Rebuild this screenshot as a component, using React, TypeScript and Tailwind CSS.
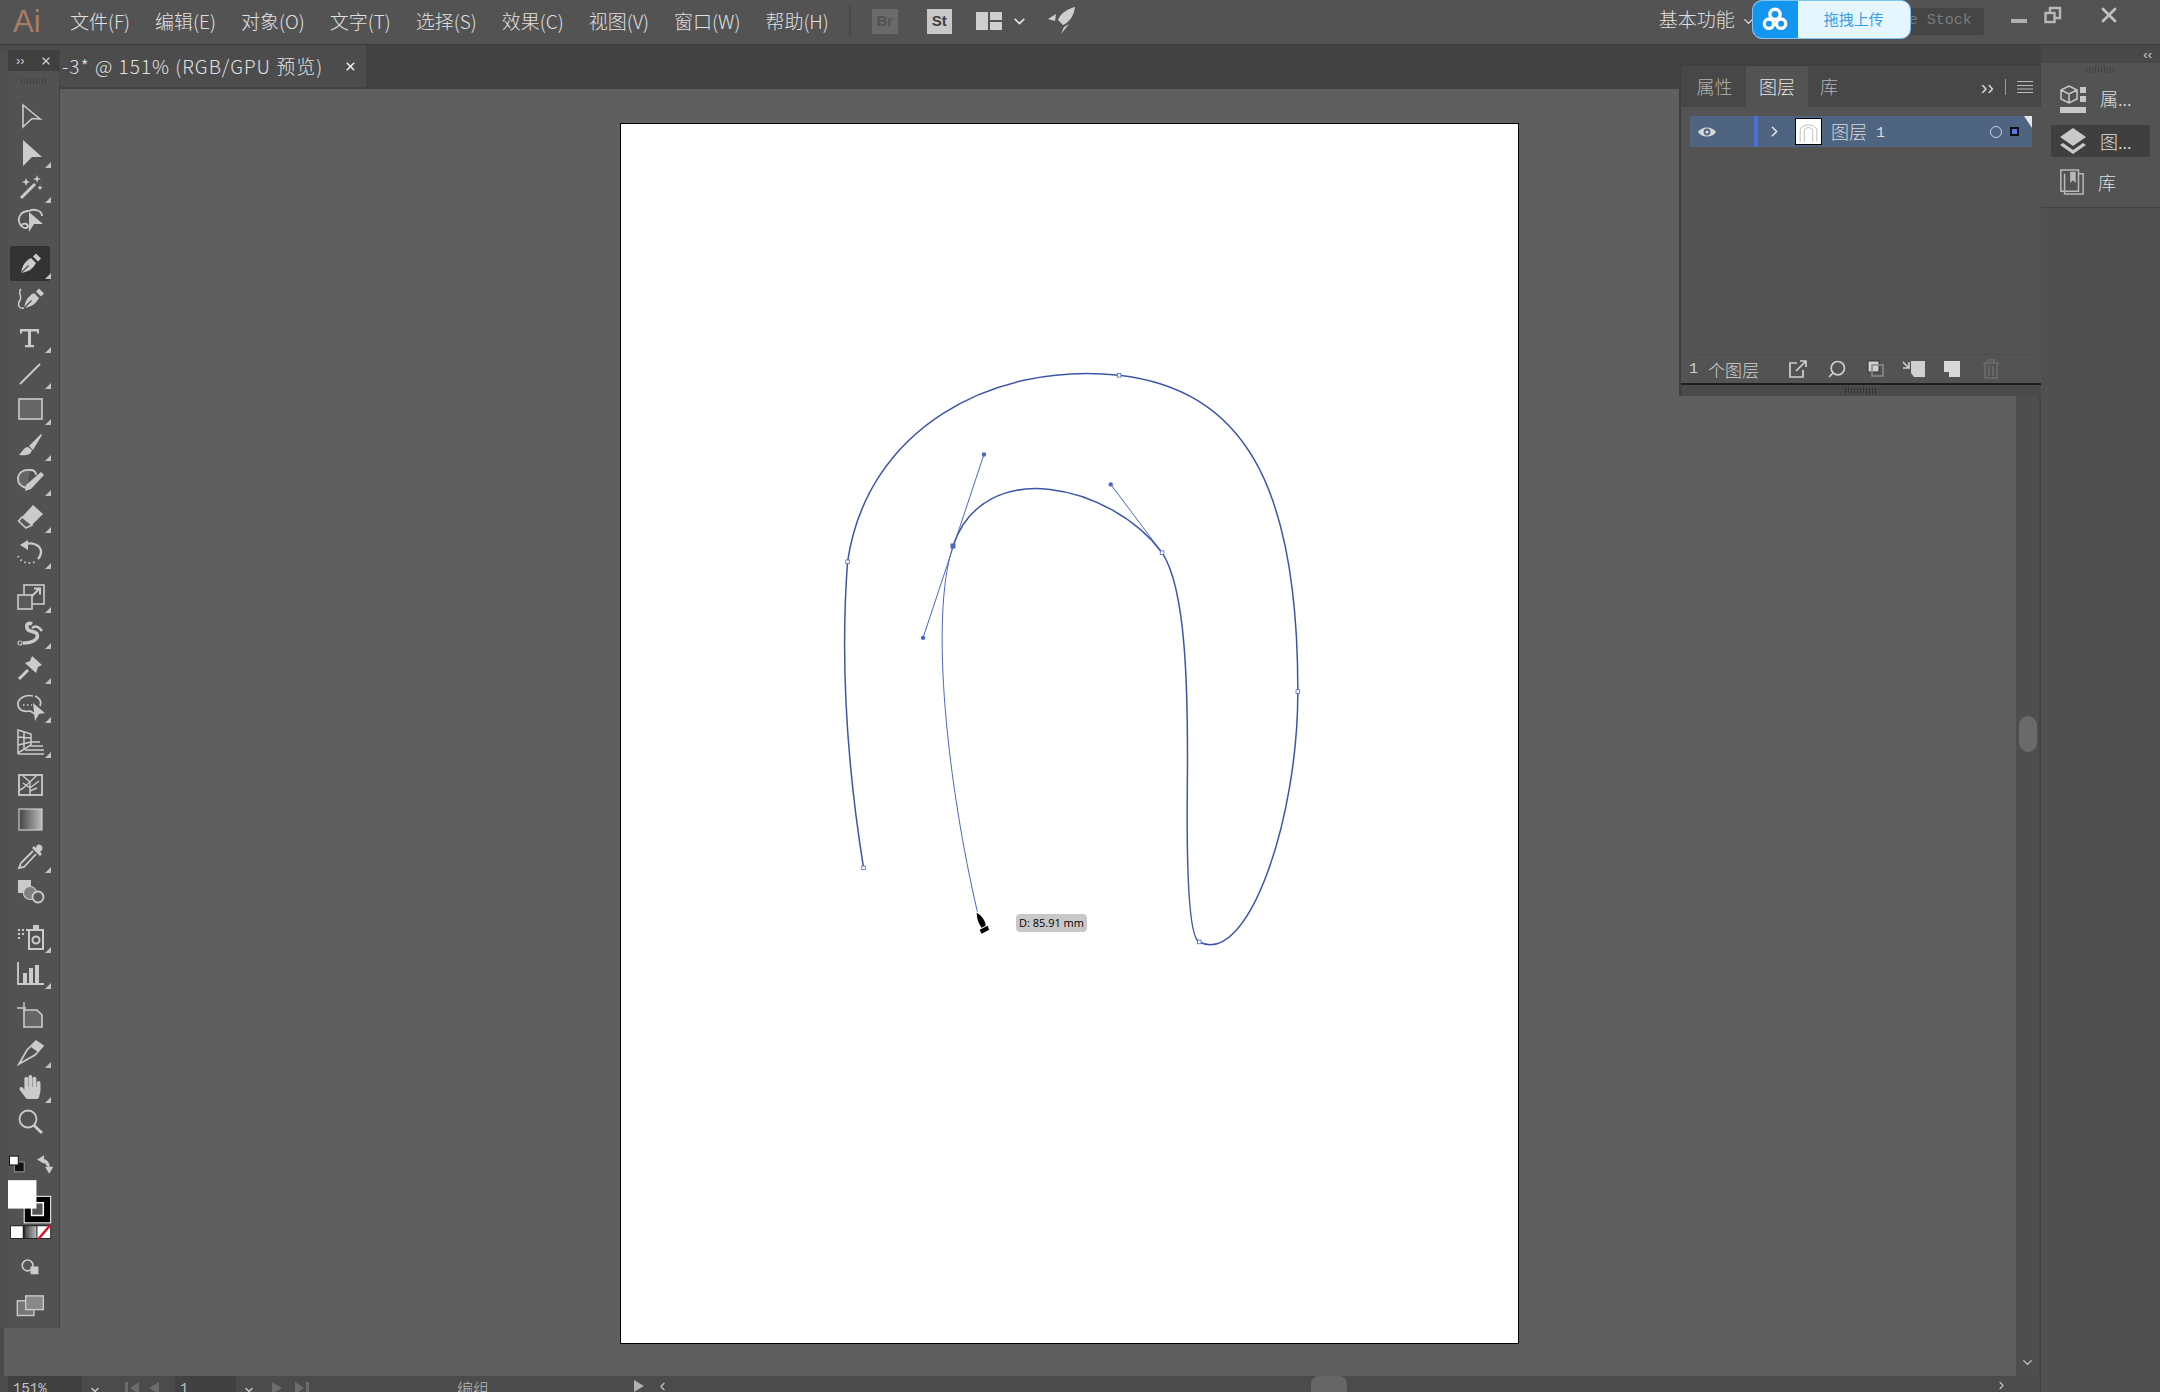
import React from "react";
import { Search, ChevronDown, ChevronRight, ChevronLeft, X } from "lucide-react";
import { FaHandPaper } from "react-icons/fa";

const menus = ["文件(F)", "编辑(E)", "对象(O)", "文字(T)", "选择(S)", "效果(C)", "视图(V)", "窗口(W)", "帮助(H)"];

const c = "#cbcbcb";

const Nib = () => (
  <>
    <path d="M6 25 C7 18 10 13 16 10 L21 15 C18 21 13 24 6 25Z" fill={c} />
    <path d="M18 8.5 l3-3 5 5 -3 3z" fill={c} />
    <path d="M6 25 L13.5 17.5" stroke="#525252" strokeWidth="1.2" />
  </>
);

const tools: { mt: string; marker?: boolean; active?: boolean; icon: React.ReactNode }[] = [
  { mt: "mt-[8px]", icon: <path d="M8 5 L25 19 L17 18.5 L8 27Z" fill="none" stroke={c} strokeWidth="1.6" /> },
  { mt: "mt-[3px]", marker: true, icon: <path d="M8 3 L27 20 L17 20 L8 29Z" fill={c} /> },
  {
    mt: "mt-[1px]",
    marker: true,
    icon: (
      <>
        <path d="M6 26 L20 12" stroke={c} strokeWidth="3" />
        <path d="M11 6 l1.2 3 3 1 -3 1 -1.2 3 -1.2-3 -3-1 3-1z M22 3 l1 3 3 1 -3 1 -1 3 -1-3 -3-1 3-1z M25 13 l.8 2 2 .8 -2 .8 -.8 2 -.8-2 -2-.8 2-.8z" fill={c} />
      </>
    ),
  },
  {
    mt: "-mt-[1px]",
    icon: (
      <>
        <path d="M14 6 C5 6 2 14 5 19 C7 23 11 24 13 22 C13 18 8 18 7 20" fill="none" stroke={c} strokeWidth="1.8" />
        <path d="M14 6 C20 3 27 6 27 11" fill="none" stroke={c} strokeWidth="1.8" />
        <path d="M14 7 L28 19 L19 19 L14 27Z" fill={c} />
      </>
    ),
  },
  { mt: "mt-[9px]", marker: true, active: true, icon: <Nib /> },
  {
    mt: "mt-[1px]",
    icon: (
      <>
        <g transform="translate(3 0)">
          <Nib />
        </g>
        <path d="M6 6 C2 10 8 13 5 17 C2 22 4 26 9 25" fill="none" stroke={c} strokeWidth="1.5" />
      </>
    ),
  },
  { mt: "mt-[5px]", marker: true, icon: <path d="M5 7h19v4.5h-2V9.5h-6V23h3v2.2H10V23h3V9.5H7v2H5z" fill={c} /> },
  { mt: "mt-[2px]", marker: true, icon: <path d="M5 26 L25 6" stroke={c} strokeWidth="1.8" /> },
  { mt: "mt-[2px]", marker: true, icon: <rect x="4" y="5" width="23" height="20" fill="#666" stroke={c} strokeWidth="1.6" /> },
  {
    mt: "mt-[2px]",
    marker: true,
    icon: (
      <>
        <path d="M14 16 L26 4 L27 5 L18 20Z" fill={c} />
        <path d="M13 17 C9 17 8 21 4 25 C10 26 16 25 17 20Z" fill={c} />
      </>
    ),
  },
  {
    mt: "mt-[1px]",
    marker: true,
    icon: (
      <>
        <path d="M15 5 C8 4 3 8 3 14 C3 19 7 22 12 23" fill="#666" stroke={c} strokeWidth="1.8" />
        <path d="M15 5 C19 5 21 7 21 10" fill="none" stroke={c} strokeWidth="1.8" />
        <path d="M11 20 L26 7 L29 10 L16 24 L10 26Z" fill={c} />
      </>
    ),
  },
  {
    mt: "mt-[3px]",
    marker: true,
    icon: (
      <>
        <path d="M7 15 L18 3 L28 12 L17 23Z" fill={c} />
        <path d="M7 15 L3.5 19 L11 26 L17 23Z" fill="#5a5a5a" stroke={c} strokeWidth="1.6" />
      </>
    ),
  },
  {
    mt: "mt-[2px]",
    marker: true,
    icon: (
      <>
        <path d="M11 6 C19 4 26 8 26 14 C26 17 25 19 23 21" fill="none" stroke={c} strokeWidth="2.2" />
        <path d="M5 7 L13 2 L13 12Z" fill={c} />
        <path d="M3 18 C5 23 11 27 20 24" fill="none" stroke={c} strokeWidth="2" strokeDasharray="1.5 3" />
      </>
    ),
  },
  {
    mt: "mt-[10px]",
    marker: true,
    icon: (
      <>
        <rect x="9" y="3" width="20" height="19" fill="none" stroke={c} strokeWidth="1.6" />
        <rect x="3" y="13" width="14" height="14" fill="#5a5a5a" stroke={c} strokeWidth="1.6" />
        <path d="M17 14 L24 7 M19 6.5 h6 v6" fill="none" stroke={c} strokeWidth="2" />
      </>
    ),
  },
  {
    mt: "mt-[2px]",
    marker: true,
    icon: (
      <>
        <path d="M8 25 C18 25 24 21 22 16 C20 12 13 15 12 10 C11 6 14 4 17 6" fill="none" stroke={c} strokeWidth="3.5" />
        <path d="M17 10 C21 7 24 9 27 13" fill="none" stroke={c} strokeWidth="2.5" />
        <circle cx="5" cy="25" r="2" fill="none" stroke={c} strokeWidth="1.2" />
      </>
    ),
  },
  {
    mt: "mt-[1px]",
    marker: true,
    icon: (
      <>
        <path d="M17 3 L27 12 L23 14 L21 20 L10 10 L15 8Z" fill={c} />
        <path d="M13 17 L4 26" stroke={c} strokeWidth="3" />
      </>
    ),
  },
  {
    mt: "mt-[5px]",
    marker: true,
    icon: (
      <>
        <path d="M18 4 C10 2 2 7 3 13 C4 19 10 20 15 19 L20 22" fill="none" stroke={c} strokeWidth="1.7" />
        <path d="M20 4 C25 6 27 10 25 14" fill="none" stroke={c} strokeWidth="1.7" />
        <path d="M18 11 L30 21 L24 22 L20 29Z" fill={c} />
        <path d="M8 13h1.5M12 13h1.5M16 13h1" stroke={c} strokeWidth="1.5" />
      </>
    ),
  },
  {
    mt: "mt-[1px]",
    marker: true,
    icon: (
      <>
        <path d="M3 3 L16 7 L16 18 L3 26Z M3 10 L16 11 M3 18 L16 15 M9 5 L9 22" fill="none" stroke={c} strokeWidth="1.5" />
        <path d="M16 15 h9 M16 19 h12 M10 23 h19 M3 27 h26" stroke={c} strokeWidth="1.3" />
      </>
    ),
  },
  {
    mt: "mt-[9px]",
    icon: (
      <>
        <rect x="4" y="5" width="23" height="20" fill="none" stroke={c} strokeWidth="1.8" />
        <path d="M5 20 C10 18 12 14 15 12 L22 5 M15 12 L15 25 M15 12 L8 6 M15 18 L24 11 M15 18 L8 13 M15 21 L22 18" fill="none" stroke={c} strokeWidth="1.4" />
      </>
    ),
  },
  {
    mt: "mt-[1px]",
    icon: (
      <>
        <defs>
          <linearGradient id="grad" x1="0" x2="1" y1="0" y2="0">
            <stop offset="0" stopColor="#444" />
            <stop offset="1" stopColor="#bbb" />
          </linearGradient>
        </defs>
        <rect x="4" y="4" width="23" height="21" fill="url(#grad)" stroke={c} strokeWidth="1.2" />
      </>
    ),
  },
  {
    mt: "mt-[3px]",
    marker: true,
    icon: (
      <>
        <path d="M22 3 C25 1 29 5 27 8 L25 10 L27 12 L25 14 L17 6 L19 4 L21 6Z" fill={c} />
        <path d="M18 9 L6 21 L4 26 L9 25 L21 12" fill="none" stroke={c} strokeWidth="1.8" />
      </>
    ),
  },
  {
    mt: "mt-[2px]",
    icon: (
      <>
        <rect x="3" y="2" width="13" height="13" fill={c} />
        <circle cx="15" cy="15" r="6.5" fill="#808080" stroke={c} strokeWidth="1.2" />
        <circle cx="23" cy="19" r="5.5" fill="#5a5a5a" stroke={c} strokeWidth="1.8" />
      </>
    ),
  },
  {
    mt: "mt-[10px]",
    marker: true,
    icon: (
      <>
        <path d="M3 7h2v2H3zM7 7h2v2H7zM11 7h2v2h-2zM3 11h2v2H3zM7 11h2v2H7zM3 15h2v2H3z" fill={c} />
        <rect x="14" y="8" width="14" height="19" fill="none" stroke={c} strokeWidth="2" />
        <rect x="18" y="3" width="6" height="5" fill={c} />
        <circle cx="21" cy="18" r="3.5" fill="none" stroke={c} strokeWidth="2" />
      </>
    ),
  },
  {
    mt: "mt-[2px]",
    marker: true,
    icon: (
      <>
        <path d="M3 4 V26 H29" fill="none" stroke={c} strokeWidth="1.8" />
        <path d="M8 15h4v11H8zM14 10h4v16h-4zM20 7h4v19h-4z" fill={c} />
      </>
    ),
  },
  {
    mt: "mt-[8px]",
    icon: (
      <>
        <path d="M2 8h9M9 2v9" stroke={c} strokeWidth="1.4" />
        <path d="M9 10 H22 L27 15 V27 H9Z" fill="#666" stroke={c} strokeWidth="1.6" />
      </>
    ),
  },
  {
    mt: "mt-[3px]",
    marker: true,
    icon: (
      <>
        <path d="M4 27 L12 13 L21 4 L28 9 L20 18Z" fill="none" stroke={c} strokeWidth="1.7" />
        <path d="M21 4 L28 9 L23 15 L16 10Z" fill={c} />
      </>
    ),
  },
  {
    mt: "mt-[1px]",
    marker: true,
    icon: (
      <foreignObject x="3" y="3" width="25" height="25">
        <FaHandPaper size={24} color={c} />
      </foreignObject>
    ),
  },
  {
    mt: "mt-[1px]",
    icon: (
      <>
        <circle cx="13" cy="12" r="8.5" fill="none" stroke={c} strokeWidth="1.8" />
        <path d="M19 18.5 L27 26" stroke={c} strokeWidth="3" />
      </>
    ),
  },
];

function Tool({ mt, marker, active, icon }: (typeof tools)[number]) {
  return (
    <div className={`${mt} relative flex h-[34px] shrink-0 items-center justify-center`}>
      {active && <div className="absolute inset-x-[2px] -bottom-[1px] top-0 rounded-[2px] bg-[#333333]" />}
      <svg viewBox="0 0 30 30" className="relative h-[30px] w-[30px]">
        {icon}
      </svg>
      {marker && (
        <svg viewBox="0 0 6 6" className="absolute bottom-[1px] right-[1px] h-[6px] w-[6px]">
          <path d="M6 0V6H0Z" fill="#c4c4c4" />
        </svg>
      )}
    </div>
  );
}

function Toolbar() {
  return (
    <div className="absolute left-0 top-[50px] z-20 flex h-[1278px] w-[60px] flex-col border-l-[8px] border-r border-l-[#4f4f4f] border-r-[#444444] bg-[#525252]">
      <div className="flex h-[21px] shrink-0 items-center justify-between bg-[#404040] pl-[8px] pr-[7px] text-[#d0d0d0]">
        <span className="font-['Liberation_Sans',sans-serif] text-[13px] leading-none">››</span>
        <X size={12} strokeWidth={2.4} />
      </div>
      <div className="flex h-[19px] shrink-0 items-center justify-center">
        <div className="h-[6px] w-[26px] bg-[repeating-linear-gradient(90deg,#414141_0,#414141_1px,transparent_1px,transparent_3px)]" />
      </div>
      <div className="flex flex-col pr-[7px]">
        {tools.map((t, i) => (
          <Tool key={i} {...t} />
        ))}
      </div>
      <div className="mt-[11px] h-[178px]">
        <svg viewBox="0 0 52 178" className="h-full w-full">
          {/* default colours + swap */}
          <rect x="6.5" y="10.5" width="10" height="10" fill="#111" stroke="#999" />
          <rect x="1.5" y="4.5" width="9" height="9" fill="#fff" stroke="#111" />
          <path d="M34 8 C39 8 42 11 42 17 M31 8 l5-3 v6z M42 21 l-3-5 h6z" fill={c} stroke={c} strokeWidth="1.5" />
          {/* stroke and fill */}
          <rect x="16.5" y="45.5" width="27" height="27" fill="#000" stroke="#fff" />
          <rect x="24" y="52" width="12" height="13" fill="#555" stroke="#fff" strokeWidth="1.5" />
          <rect x="0" y="29" width="29" height="29" fill="#fff" />
          {/* colour modes */}
          <rect x="2" y="75" width="42" height="14" fill="#222" />
          <rect x="3" y="76" width="12" height="12" fill="#fff" />
          <rect x="17" y="76" width="12" height="12" fill="url(#grad)" />
          <rect x="30" y="76" width="13" height="12" fill="#fff" />
          <path d="M31 89 L43 75" stroke="#d0122c" strokeWidth="2.5" />
          {/* draw modes */}
          <circle cx="20" cy="116" r="5.5" fill="#555" stroke={c} strokeWidth="1.6" />
          <rect x="23" y="117" width="8" height="8" fill={c} />
          {/* screen mode */}
          <rect x="9.5" y="152" width="17" height="15" fill="#777" stroke={c} strokeWidth="1.4" />
          <rect x="18" y="147" width="18" height="14" fill="#888" stroke={c} strokeWidth="1.4" />
        </svg>
      </div>
    </div>
  );
}

function TopBar() {
  return (
    <div className="flex h-[45px] shrink-0 items-center border-b border-[#3a3a3a] bg-[#535353] pb-[2px] text-[#e0e0e0]">
      <span className="ml-[13px] w-[57px] font-['Liberation_Sans',sans-serif] text-[31px] leading-none text-[#a87c64]">Ai</span>
      <div className="flex gap-[25px] text-[19px] font-light">
        {menus.map((m) => (
          <span key={m}>{m}</span>
        ))}
      </div>
      <div className="ml-[20px] h-[32px] w-[2px] bg-[#4a4a4a]" />
      <div className="ml-[21px] flex h-[25px] w-[26px] items-center justify-center bg-[#6a6a6a] font-['Liberation_Sans',sans-serif] text-[15px] font-bold text-[#525252]">Br</div>
      <div className="ml-[29px] flex h-[25px] w-[25px] items-center justify-center bg-[#c8c8c8] font-['Liberation_Sans',sans-serif] text-[15px] font-bold text-[#3f3f3f]">St</div>
      <svg viewBox="0 0 26 18" className="ml-[24px] h-[18px] w-[26px]">
        <path d="M0 0h12v18H0zM14 0h12v8H14zM14 10h12v8H14z" fill="#cfcfcf" />
      </svg>
      <ChevronDown size={17} strokeWidth={2.4} className="ml-[9px] text-[#e0e0e0]" />
      <svg viewBox="0 0 30 30" className="ml-[19px] h-[30px] w-[30px]">
        <path d="M28 1 C20 3 14 7 11 14 L16 19 C23 16 27 9 28 1Z M9 8 L1 13 L8 15Z M17 21 L14 28 L22 18Z" fill="#cfcfcf" />
      </svg>
      <span className="ml-[582px] -translate-y-[2px] text-[19px] font-light">基本功能</span>
      <ChevronDown size={15} strokeWidth={2} className="-mr-[4px] ml-[6px] shrink-0" />
      <div className="z-10 flex h-[39px] w-[159px] shrink-0 -translate-y-[2px] overflow-hidden rounded-[10px] border border-[#7cc4f6] bg-[#e6f6ff]">
        <div className="flex w-[45px] items-center justify-center bg-[#1296f0]">
          <svg viewBox="0 0 30 30" className="h-[28px] w-[28px]" fill="none" stroke="#fff" strokeWidth="3.6">
            <circle cx="15" cy="10" r="5.5" />
            <circle cx="8.5" cy="20" r="5" />
            <circle cx="21.5" cy="20" r="5" />
          </svg>
        </div>
        <div className="flex flex-1 items-center justify-center text-[15px] text-[#3a9fe8]">拖拽上传</div>
      </div>
      <div className="flex h-[27px] w-[73px] shrink-0 items-center justify-end overflow-hidden rounded-r-[3px] bg-[#454545] pr-[12px] font-['Liberation_Mono',monospace] text-[15px] whitespace-pre text-[#7c7c7c]">
        e Stock
      </div>
      <div className="ml-[27px] h-[4px] w-[16px] bg-[#b0b0b0]" />
      <svg viewBox="0 0 18 18" className="ml-[17px] h-[18px] w-[18px] -translate-y-[6px]" fill="none" stroke="#b8b8b8" strokeWidth="2.4">
        <rect x="1.5" y="7" width="9" height="9" />
        <path d="M6 6V2h10v10h-5" />
      </svg>
      <X size={24} strokeWidth={2.8} className="ml-[35px] -translate-y-[6px] text-[#c0c0c0]" />
    </div>
  );
}

function DocTab() {
  return (
    <div className="flex h-[44px] shrink-0 bg-[#424242]">
      <div className="flex h-[42px] w-[366px] items-center bg-[#4c4c4c] pl-[42px] text-[19px] font-light tracking-[1px] text-[#e0e0e0]">
        <span className="whitespace-pre">题-3* @ 151% (RGB/GPU 预览)</span>
        <X size={13} strokeWidth={3} className="ml-[21px] shrink-0 text-[#eeeeee]" />
      </div>
    </div>
  );
}

function Artwork() {
  const blue = "#4a66c4";
  const anchors = [
    [862.7, 869],
    [846.7, 562.5],
    [1118.7, 375.7],
    [1297.7, 692.5],
    [1199, 943.3],
    [1161.7, 553.4],
  ];
  const handles = [
    [983.3, 455],
    [922.3, 638.7],
    [1110.3, 485],
  ];
  return (
    <svg viewBox="620 124 898 1221" className="h-full w-full">
      <path
        d="M862.7 869 C850 790 838 680 846.7 562.5 C866 430 990 362 1118.7 375.7 C1240 390 1298 480 1297.7 692.5 C1298 820 1248 968 1199 943.3 C1190 940 1186 890 1187 790 C1188 690 1186 590 1161.7 553.4 C1110.3 485 983.3 455 952.3 546.7"
        fill="none"
        stroke="#3d55a8"
        strokeWidth="1.5"
      />
      <path d="M952.3 546.7 C928 620 948 790 976.7 913" fill="none" stroke={blue} strokeWidth="1" />
      <path d="M983.3 455 L922.3 638.7 M1110.3 485 L1161.7 553.4" fill="none" stroke={blue} strokeWidth="1" />
      {handles.map(([x, y]) => (
        <circle key={x} cx={x} cy={y} r="2.2" fill={blue} />
      ))}
      {anchors.map(([x, y]) => (
        <rect key={x} x={x - 1.8} y={y - 1.8} width="3.6" height="3.6" fill="#fff" stroke={blue} strokeWidth="0.8" />
      ))}
      <rect x="949.8" y="544.2" width="5" height="5" fill={blue} />
      <path d="M976 914 C981 917 985 922 985 927 L981 929 C978 925 976 920 976 914Z" fill="#000" />
      <path d="M979 931 L987 927 L988.5 931 L981 935Z" fill="#000" />
    </svg>
  );
}

function Canvas() {
  return (
    <div className="flex min-h-0 flex-1">
      <div className="relative flex-1 border-l-[4px] border-[#4a4a4a] bg-[#5f5f5f] pl-[616px] pt-[34px]">
        <div className="relative h-[1221px] w-[899px] border border-black bg-white">
          <Artwork />
          <div className="absolute left-[395px] top-[790px] flex h-[18px] w-[71px] items-center justify-center rounded-[4px] bg-[#c8c8c8] font-['Open_Sans',sans-serif] text-[11px] text-black">
            D: 85.91 mm
          </div>
        </div>
      </div>
      <div className="flex w-[24px] flex-col items-center border-r border-[#444444] bg-[#4e4e4e] pb-[6px] pt-[627px] text-[#c8c8c8]">
        <div className="h-[36px] w-[18px] rounded-[9px] bg-[#6a6a6a]" />
        <ChevronDown size={15} className="mt-auto" />
      </div>
    </div>
  );
}

function StatusBar() {
  return (
    <div className="flex h-[16px] shrink-0 items-start bg-[#4b4b4b] pl-[8px] text-[14px] leading-none text-[#c4c4c4]">
      <div className="h-full w-[74px] overflow-hidden bg-[#414141] pl-[5px] pt-[6px] font-['Liberation_Mono',monospace]">151%</div>
      <div className="flex h-full w-[25px] justify-center pt-[8px]">
        <ChevronDown size={12} strokeWidth={3} />
      </div>
      <div className="ml-[18px] flex h-full w-[50px] gap-[10px] pt-[6px] text-[#6c6c6c]">
        <svg viewBox="0 0 14 12" className="h-[12px] w-[14px]"><path d="M0 0h3v12H0zM14 0v12L5 6z" fill="currentColor" /></svg>
        <svg viewBox="0 0 10 12" className="h-[12px] w-[10px]"><path d="M10 0v12L0 6z" fill="currentColor" /></svg>
      </div>
      <div className="h-full w-[61px] overflow-hidden bg-[#414141] pl-[5px] pt-[6px] font-['Liberation_Mono',monospace]">1</div>
      <div className="flex h-full w-[25px] justify-center pt-[8px]">
        <ChevronDown size={12} strokeWidth={3} />
      </div>
      <div className="ml-[11px] flex h-full w-[50px] gap-[13px] pt-[6px] text-[#6c6c6c]">
        <svg viewBox="0 0 10 12" className="h-[12px] w-[10px]"><path d="M0 0v12l10-6z" fill="currentColor" /></svg>
        <svg viewBox="0 0 14 12" className="h-[12px] w-[14px]"><path d="M11 0h3v12h-3zM0 0v12l9-6z" fill="currentColor" /></svg>
      </div>
      <div className="-ml-[2px] h-full w-[306px] overflow-hidden pt-[4px] text-center text-[16px] font-light text-[#b8b8b8]">编组</div>
      <svg viewBox="0 0 10 12" className="ml-[8px] mt-[4px] h-[12px] w-[10px]"><path d="M0 0v12l10-6z" fill="#b0b0b0" /></svg>
      <ChevronLeft size={13} className="ml-[12px] mt-[4px]" />
      <div className="ml-[642px] h-full w-[36px] rounded-t-[8px] bg-[#666666]" />
      <ChevronRight size={13} className="ml-[648px] mt-[3px]" />
    </div>
  );
}

function LayersPanel() {
  return (
    <div className="absolute left-[1679px] top-[64px] z-20 flex h-[332px] w-[362px] flex-col border-l-[2px] border-t-[2px] border-[#3f3f3f] bg-[#535353]">
      <div className="flex h-[41px] shrink-0 items-stretch bg-[#474747] text-[18px] font-light text-[#b4b4b4]">
        <div className="flex w-[65px] items-center justify-center pl-[2px]">属性</div>
        <div className="flex w-[62px] items-center justify-center bg-[#535353] text-[#e6e6e6]">图层</div>
        <div className="flex w-[50px] items-center justify-center pr-[8px]">库</div>
        <div className="ml-auto mr-[8px] flex items-center gap-[11px] text-[#d8d8d8]">
          <span className="font-['Liberation_Sans',sans-serif] text-[20px] leading-none">››</span>
          <div className="h-[16px] w-[1px] bg-[#9a9a9a]" />
          <svg viewBox="0 0 16 12" className="h-[12px] w-[16px]"><path d="M0 .5h16M0 4.5h16M0 8h16M0 11.5h16" stroke="#bcbcbc" /></svg>
        </div>
      </div>
      <div className="mx-[9px] mt-[9px] flex-1 border-b border-[#4d4d4d]">
        <div className="relative flex h-[31px] items-center bg-[#4f6480]">
          <svg viewBox="0 0 20 14" className="ml-[7px] h-[14px] w-[20px]">
            <path d="M1 7 C5 1 15 1 19 7 C15 13 5 13 1 7Z" fill="#d8d8d8" />
            <circle cx="10" cy="7" r="3.4" fill="#4f6480" />
            <circle cx="10" cy="7" r="1.6" fill="#d8d8d8" />
          </svg>
          <div className="ml-[37px] h-full w-[4px] bg-[#4a6fd8]" />
          <ChevronRight size={17} strokeWidth={2.2} className="ml-[8px] text-[#e6e6e6]" />
          <div className="ml-[12px] h-[27px] w-[27px] border-[1.5px] border-black bg-white">
            <svg viewBox="0 0 24 24" className="h-full w-full" fill="none" stroke="#999" strokeWidth="0.6">
              <path d="M4 22V11C4 4 20 4 20 11V22M8 22V12C8 7 16 7 16 12V22" />
            </svg>
          </div>
          <span className="ml-[9px] text-[18px] font-light text-[#dadada]">图层</span>
          <span className="ml-[9px] mt-[3px] font-['Liberation_Mono',monospace] text-[15px] leading-none text-[#dadada]">1</span>
          <div className="absolute right-[30px] top-[10px] h-[12px] w-[12px] rounded-full border-[1.5px] border-[#c6d2e0]" />
          <div className="absolute right-[13px] top-[11px] h-[9px] w-[9px] border-[2px] border-[#111111] bg-[#5a78e0]" />
          <svg viewBox="0 0 8 12" className="absolute right-0 top-0 h-[12px] w-[8px]"><path d="M0 0H8V12Z" fill="#e6e6e6" /></svg>
        </div>
      </div>
      <div className="flex h-[30px] shrink-0 items-center border-b-[2px] border-[#1e1e1e] pl-[8px] text-[#d2d2d2]">
        <span className="flex w-[87px] items-center whitespace-pre text-[17px] font-light leading-none">
          <span className="mr-[10px] font-['Liberation_Mono',monospace] text-[15px]">1</span>个图层
        </span>
        <svg viewBox="0 0 20 20" className="ml-[12px] h-[20px] w-[20px]" fill="none" stroke="#d0d0d0" strokeWidth="1.7">
          <path d="M9 4H2v14h13v-7M8 12L18 2M12 2h6v6" />
        </svg>
        <Search size={20} strokeWidth={2} className="ml-[19px] -scale-x-100 text-[#d0d0d0]" />
        <svg viewBox="0 0 20 20" className="ml-[18px] h-[20px] w-[20px]">
          <rect x="3" y="2" width="11" height="11" fill="#d0d0d0" stroke="#333" />
          <rect x="7" y="6" width="11" height="11" fill="none" stroke="#8a8a8a" strokeWidth="1.6" />
        </svg>
        <svg viewBox="0 0 24 20" className="ml-[17px] h-[20px] w-[24px]">
          <path d="M9 2h14v16H12l-3-4z" fill="#d0d0d0" />
          <path d="M1 3 L7 9 M1 9h6V3" stroke="#d0d0d0" strokeWidth="1.6" fill="none" />
        </svg>
        <svg viewBox="0 0 18 18" className="ml-[17px] h-[18px] w-[18px]">
          <path d="M1 1h16v16H6v-5H1z" fill="#d8d8d8" />
        </svg>
        <svg viewBox="0 0 18 20" className="ml-[21px] h-[20px] w-[18px]" fill="none" stroke="#6e6e6e" strokeWidth="1.5">
          <path d="M1 4h16M6 4V1h6v3M3 4v15h12V4M7 7v10M11 7v10" />
        </svg>
      </div>
      <div className="flex h-[11px] shrink-0 items-center justify-center bg-[#4a4a4a]">
        <div className="h-[6px] w-[32px] bg-[repeating-linear-gradient(90deg,#333333_0,#333333_1px,transparent_1px,transparent_3px)]" />
      </div>
    </div>
  );
}

function Dock() {
  return (
    <div className="flex w-[120px] shrink-0 flex-col border-l border-[#444444] bg-[#505050]">
      <div className="flex h-[18px] shrink-0 items-center justify-end bg-[#484848] pr-[8px] font-['Liberation_Sans',sans-serif] text-[13px] leading-none text-[#d0d0d0]">‹‹</div>
      <div className="flex h-[145px] shrink-0 flex-col border-b border-[#444444] bg-[#535353] text-[18px] font-light text-[#e0e0e0]">
        <div className="flex h-[14px] shrink-0 items-center justify-center">
          <div className="h-[6px] w-[30px] bg-[repeating-linear-gradient(90deg,#414141_0,#414141_1px,transparent_1px,transparent_3px)]" />
        </div>
        <div className="flex h-[44px] items-center pl-[18px]">
          <svg viewBox="0 0 28 30" className="h-[30px] w-[28px]" fill="none" stroke="#c8c8c8" strokeWidth="1.5">
            <path d="M10 2 L18 6 V15 L10 19 L2 15 V6Z M2 6 L10 10 L18 6 M10 10 V19" />
            <path d="M21 3h6v6h-6zM21 12h6v6h-6zM1 23h26v6H1z" fill="#c8c8c8" stroke="none" />
          </svg>
          <span className="ml-[13px]">属...</span>
        </div>
        <div className="mx-[10px] mt-[4px] flex h-[33px] items-center rounded-[2px] bg-[#3f3f3f] pl-[8px]">
          <svg viewBox="0 0 28 30" className="h-[30px] w-[28px]">
            <path d="M14 2 L27 11 L14 20 L1 11Z" fill="#c8c8c8" />
            <path d="M4 17 L14 24 L24 17 L27 19 L14 28 L1 19Z" fill="#c8c8c8" />
          </svg>
          <span className="ml-[13px]">图...</span>
        </div>
        <div className="flex h-[50px] items-center pl-[18px]">
          <svg viewBox="0 0 28 30" className="h-[28px] w-[26px]" fill="none" stroke="#b8b8b8" strokeWidth="1.6">
            <path d="M2 2h19v23H2z M6 6V28H26V6H21" />
            <path d="M12 4h6v12l-3-3-3 3z" fill="#b8b8b8" stroke="none" />
          </svg>
          <span className="ml-[13px]">库</span>
        </div>
      </div>
    </div>
  );
}

export default function App() {
  return (
    <div className="relative flex h-[1392px] w-[2160px] flex-col overflow-hidden bg-[#535353] font-['Noto_Sans_CJK_SC','Liberation_Sans',sans-serif]">
      <TopBar />
      <div className="flex min-h-0 flex-1">
        <div className="flex min-w-0 flex-1 flex-col">
          <DocTab />
          <Canvas />
          <StatusBar />
        </div>
        <Dock />
      </div>
      <Toolbar />
      <LayersPanel />
    </div>
  );
}
